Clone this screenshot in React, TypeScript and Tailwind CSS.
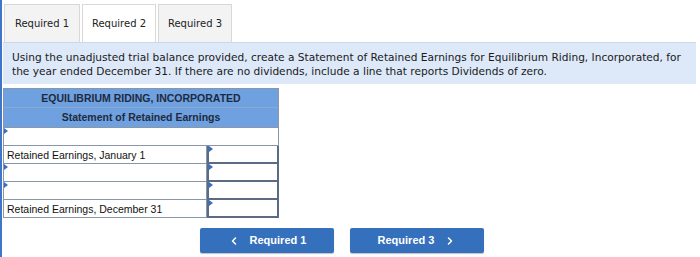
import { ChevronLeft, ChevronRight } from "lucide-react";

const verdana = { fontFamily: '"DejaVu Sans", Verdana, sans-serif' };
const arial = { fontFamily: '"Liberation Sans", Arial, sans-serif' };

function Marker() {
  return (
    <span className="absolute left-0 top-0 w-0 h-0 border-t-[3px] border-b-[3px] border-l-[4px] border-t-transparent border-b-transparent border-l-[#3a6ec6]" />
  );
}

function Row({ label, marker }: { label?: string; marker?: boolean }) {
  return (
    <div className="flex h-[18px]">
      <div className="relative flex-1 border border-[#8a97a8] border-t-0 bg-white text-[10.5px] leading-[18px] pl-[3px] text-[#111]">
        {marker && <Marker />}
        {label}
      </div>
      <div className="relative w-[72px] border-[2px] border-t-0 border-[#5a6b82] bg-white">
        <Marker />
      </div>
    </div>
  );
}

export default function App() {
  return (
    <div className="w-[700px] h-[257px] bg-white border-l-[2px] border-[#3f76c9] relative overflow-hidden">
      <div className="flex pl-[2px] pt-[4px] gap-[2px] text-[10px] text-[#222]" style={verdana}>
        <div className="w-[76px] h-[38px] flex items-center justify-center bg-[#f3f3f3] border border-[#d8d8d8] border-b-0">
          Required 1
        </div>
        <div className="w-[74px] h-[38px] flex items-center justify-center bg-white border border-[#d8d8d8] border-b-0">
          Required 2
        </div>
        <div className="w-[74px] h-[38px] flex items-center justify-center bg-[#f3f3f3] border border-[#d8d8d8] border-b-0">
          Required 3
        </div>
      </div>
      <div
        className="ml-[1px] mr-[4px] bg-[#dde9f8] border-t border-[#cdd8e6] pl-[9px] pr-[6px] pt-[7px] pb-[6px] text-[10.6px] leading-[14px] text-[#1a1a1a]"
        style={verdana}
      >
        Using the unadjusted trial balance provided, create a Statement of Retained Earnings for Equilibrium Riding, Incorporated, for the year ended December 31. If there are no dividends, include a line that reports Dividends of zero.
      </div>
      <div className="ml-[1px] mt-[4px] w-[276px]" style={arial}>
        <div className="bg-[#6fa0df] border border-[#8a97a8] text-[10.5px] font-bold text-[#1d2b40] text-center">
          <div className="h-[19px] leading-[19px] border-b border-[#8aa9d3]">EQUILIBRIUM RIDING, INCORPORATED</div>
          <div className="h-[19px] leading-[19px]">Statement of Retained Earnings</div>
        </div>
        <div className="relative h-[18px] border border-[#8a97a8] border-t-0 bg-white">
          <Marker />
        </div>
        <Row label="Retained Earnings, January 1" />
        <Row marker />
        <Row marker />
        <Row label="Retained Earnings, December 31" />
      </div>
      <div className="flex justify-start gap-[16px] ml-[198px] mt-[10px] text-[11px] font-bold text-white" style={arial}>
        <button className="w-[134px] h-[25px] bg-[#3570bd] rounded-[2px] flex items-center justify-center gap-[10px] shadow-[0_1px_1px_rgba(0,0,0,0.25)]">
          <ChevronLeft size={12} strokeWidth={3} />
          <span>Required 1</span>
        </button>
        <button className="w-[134px] h-[25px] bg-[#3570bd] rounded-[2px] flex items-center justify-center gap-[10px] shadow-[0_1px_1px_rgba(0,0,0,0.25)]">
          <span>Required 3</span>
          <ChevronRight size={12} strokeWidth={3} />
        </button>
      </div>
    </div>
  );
}
